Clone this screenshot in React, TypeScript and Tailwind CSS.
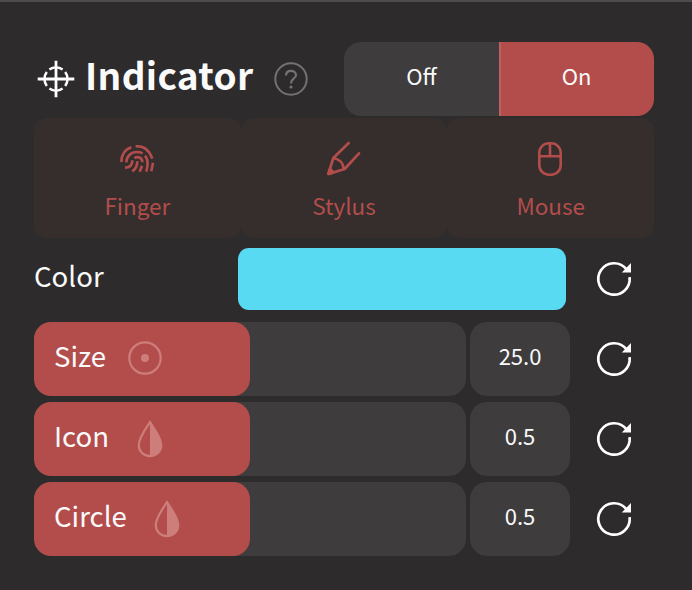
import React from "react";

type IconProps = { className?: string };

function TargetIcon() {
  return (
    <svg className="h-[38px] w-[38px] shrink-0" viewBox="-19 -19 38 38" fill="none" stroke="#fff" strokeWidth="2.8">
      <path d="M0-18.3V18.3M-18.3 0H18.3" />
      <path
        strokeWidth="2.5"
        d="M-6.6-9.4A11.5 11.5 0 0 1 6.6-9.4M-6.6 9.4A11.5 11.5 0 0 0 6.6 9.4M-9.2-6.9A11.5 11.5 0 0 0-9.2 6.9M9.2-6.9A11.5 11.5 0 0 1 9.2 6.9"
      />
    </svg>
  );
}

function HelpIcon() {
  return (
    <svg className="h-9 w-9 shrink-0" viewBox="-18 -18 36 36" fill="none" stroke="#747273" strokeWidth="2">
      <circle r="15.7" />
      <path strokeWidth="2.2" d="M-5-3.4C-5-6.6-2.8-8.2 0-8.2S5-6.5 5-3.7C5-.6.1.1.1 3.6V4.4" />
      <circle cy="8" r="1.6" fill="#747273" stroke="none" />
    </svg>
  );
}

function FingerIcon() {
  return (
    <svg className="h-[34px] w-9" viewBox="297 97 108 102" fill="none" stroke="currentColor" strokeWidth="8">
      <path d="M304 157C304 136 315 119 334 113M347 110C371 108 388 122 397 147" />
      <path d="M319 158C320 138 334 127 350 127C357 127 362 128 368 131M375 138C386 150 384 168 379 186" />
      <path d="M343 145C356 139 367 145 367 158M337 152C337 166 329 174 315 174M352 155C352 169 346 179 337 185M366 168L359 186M399 159L394 185" />
    </svg>
  );
}

function StylusIcon() {
  return (
    <svg
      className="h-9 w-9"
      viewBox="257 95 108 108"
      fill="none"
      stroke="currentColor"
      strokeWidth="8"
      strokeLinecap="round"
      strokeLinejoin="round"
    >
      <path d="M325 101L279 146L264 194L313 179L356 132M279 146C295 149 309 160 310 179" />
      <path d="M268 180C273 181 277 186 278 190L264 194Z" fill="currentColor" />
    </svg>
  );
}

function MouseIcon() {
  return (
    <svg className="mr-0.5 h-9 w-7" viewBox="-14 -18 28 36" fill="none" stroke="currentColor" strokeWidth="2.6">
      <rect x="-10.7" y="-15.7" width="21.4" height="31.4" rx="9.5" />
      <path d="M-10.7-2.7H10.7M0-15.7V-2.7" />
    </svg>
  );
}

function SizeIcon({ className = "" }: IconProps) {
  return (
    <svg className={`h-9 w-9 shrink-0 ${className}`} viewBox="-18 -18 36 36" fill="none">
      <circle r="15.7" stroke="#cd7e7b" strokeWidth="2.2" />
      <circle r="4" fill="#cd7e7b" />
    </svg>
  );
}

function DropIcon({ className = "" }: IconProps) {
  return (
    <svg className={`h-[38px] w-[26px] shrink-0 ${className}`} viewBox="-13 -19 26 38" fill="none">
      <path
        stroke="#cd7e7b"
        strokeWidth="2.2"
        d="M0-16.8C-4-10.5-11.2-1.6-11.2 6.2C-11.2 12.5-6.2 17.1 0 17.1S11.2 12.5 11.2 6.2C11.2-1.6 4-10.5 0-16.8Z"
      />
      <path fill="#cd7e7b" d="M0-17C4-10.5 11.2-1.6 11.2 6.2C11.2 12.5 6.2 17.1 0 17.1Z" />
    </svg>
  );
}

function ResetButton() {
  return (
    <button className="flex h-10 w-10 items-center justify-center" aria-label="Reset">
      <svg className="h-10 w-10" viewBox="-20 -20 40 40" fill="none">
        <path stroke="#fff" strokeWidth="2.7" d="M12.6-9.4A15.7 15.7 0 1 0 15.6-1.8" />
        <path fill="#fff" d="M17-15.9V-6.6H7.8Z" />
      </svg>
    </button>
  );
}

const modes = [
  { label: "Finger", Icon: FingerIcon },
  { label: "Stylus", Icon: StylusIcon },
  { label: "Mouse", Icon: MouseIcon },
];

const sliders = [
  { label: "Size", value: "25.0", Icon: SizeIcon, gap: "ml-[21px] mb-[3px]" },
  { label: "Icon", value: "0.5", Icon: DropIcon, gap: "ml-[28px]" },
  { label: "Circle", value: "0.5", Icon: DropIcon, gap: "ml-[27px]" },
];

export default function App() {
  return (
    <main className="h-[590px] w-[692px] overflow-hidden border-t-2 border-[#4d4b4c] bg-[#2d2b2c] pl-[34px] pt-10 font-['Noto_Sans_CJK_JP','Noto_Sans',sans-serif] text-[#fafafa]">
      <header className="flex h-[74px] w-[620px] items-center">
        <div className="flex w-[310px] items-center pl-[2.5px]">
          <TargetIcon />
          <h1 className="ml-[10.5px] pb-[10px] text-[37px] leading-[50px] font-bold tracking-[0.35px]">Indicator</h1>
          <div className="mr-[35px] ml-auto">
            <HelpIcon />
          </div>
        </div>
        <div className="flex h-[74px] w-[310px] overflow-hidden rounded-[17px] text-[22px] leading-[30px]">
          <button className="w-[155px] bg-[#3e3c3d] pb-[9px]">Off</button>
          <button className="w-[155px] border-l-2 border-[#b96361] bg-[#b34d4c] pr-0.5 pb-[9px]">On</button>
        </div>
      </header>

      <nav className="mt-[2px] flex h-[120px] w-[620px] text-[#b34d4c]">
        {modes.map(({ label, Icon }) => (
          <button key={label} className="flex flex-1 flex-col items-center rounded-[13px] bg-[#352e2d] pt-[23px]">
            <span className="flex h-9 items-center">
              <Icon />
            </span>
            <span className="mt-[13px] text-[22.5px] leading-[30px]">{label}</span>
          </button>
        ))}
      </nav>

      <section className="mt-2.5 flex h-[62px] items-center">
        <span className="w-[204px] pb-2 text-[27.6px] leading-10">Color</span>
        <div className="h-[62px] w-[328px] rounded-[11px] bg-[#59daf3]" />
        <div className="ml-7">
          <ResetButton />
        </div>
      </section>

      <section className="mt-3 flex flex-col gap-1.5">
        {sliders.map(({ label, value, Icon, gap }) => (
          <div key={label} className="flex h-[74px] items-center">
            <div className="h-[74px] w-[432px] rounded-[17px] bg-[#3e3c3d]">
              <div className="flex h-full w-1/2 items-center rounded-[17px] bg-[#b34d4c] pl-5">
                <span className="pb-2 text-[27.6px] leading-10">{label}</span>
                <Icon className={gap} />
              </div>
            </div>
            <div className="ml-1 flex h-[74px] w-[100px] items-center justify-center rounded-[17px] bg-[#3e3c3d] pb-[9px] text-[22px] leading-[30px]">
              {value}
            </div>
            <div className="ml-6">
              <ResetButton />
            </div>
          </div>
        ))}
      </section>
    </main>
  );
}
